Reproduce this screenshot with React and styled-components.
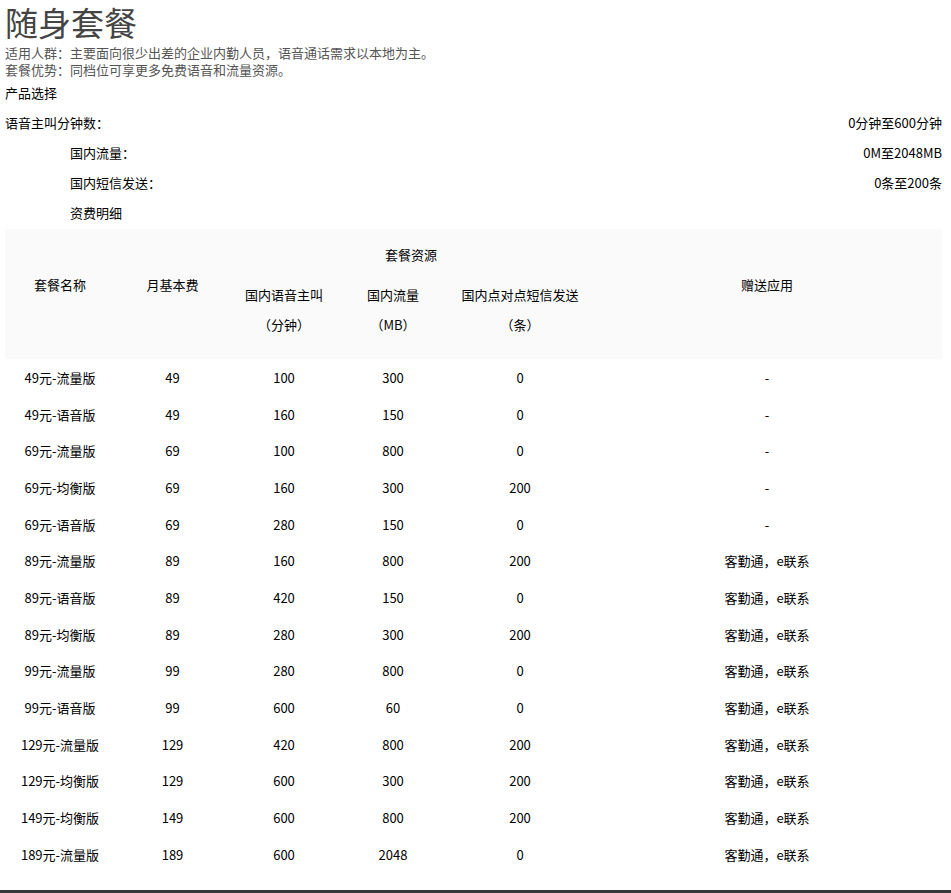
import React from "react";
import styled, { createGlobalStyle } from "styled-components";

const Global = createGlobalStyle`
  body { margin: 0; background: #fff; font-family: "Noto Sans CJK SC", "Noto Sans", sans-serif; color: #000; }
`;

const Page = styled.div`
  width: 951px; height: 893px; box-sizing: border-box; padding: 0 9px 0 5px;
  border-bottom: 3px solid #3a3a3a; position: relative;
`;
const Title = styled.h1`
  margin: 0; font-weight: 400; font-size: 33px; line-height: 44px; color: #444;
`;
const Desc = styled.p`
  margin: 0; font-size: 13px; line-height: 17px; color: #555;
`;
const Section = styled.div`
  font-size: 13px; line-height: 17px; margin-top: 6px; margin-bottom: 7px;
`;
const Opt = styled.div`
  display: flex; justify-content: space-between; font-size: 13px; line-height: 30px;
  padding-left: ${p => p.$indent ? 65 : 0}px;
`;
const cols = "110px 115px 108px 110px 144px 1fr";
const Head = styled.div`
  margin-top: 1px; background: #fafafa; display: grid; grid-template-columns: ${cols};
  grid-template-rows: 50px 30px 30px 20px; font-size: 13px;
`;
const HCell = styled.div`
  display: flex; align-items: center; justify-content: center;
  grid-column: ${p => p.$c}; grid-row: ${p => p.$r};
`;
const Row = styled.div`
  display: grid; grid-template-columns: ${cols}; height: 36.7px; align-items: center;
  font-size: 13px; text-align: center;
`;

const data = [
  ["49元-流量版",49,100,300,0,"-"],["49元-语音版",49,160,150,0,"-"],["69元-流量版",69,100,800,0,"-"],
  ["69元-均衡版",69,160,300,200,"-"],["69元-语音版",69,280,150,0,"-"],["89元-流量版",89,160,800,200,"客勤通，e联系"],
  ["89元-语音版",89,420,150,0,"客勤通，e联系"],["89元-均衡版",89,280,300,200,"客勤通，e联系"],["99元-流量版",99,280,800,0,"客勤通，e联系"],
  ["99元-语音版",99,600,60,0,"客勤通，e联系"],["129元-流量版",129,420,800,200,"客勤通，e联系"],["129元-均衡版",129,600,300,200,"客勤通，e联系"],
  ["149元-均衡版",149,600,800,200,"客勤通，e联系"],["189元-流量版",189,600,2048,0,"客勤通，e联系"],
];

export default function App() {
  return (
    <Page>
      <Global />
      <Title>随身套餐</Title>
      <Desc>适用人群：主要面向很少出差的企业内勤人员，语音通话需求以本地为主。</Desc>
      <Desc>套餐优势：同档位可享更多免费语音和流量资源。</Desc>
      <Section>产品选择</Section>
      <Opt><span>语音主叫分钟数：</span><span>0分钟至600分钟</span></Opt>
      <Opt $indent><span>国内流量：</span><span>0M至2048MB</span></Opt>
      <Opt $indent><span>国内短信发送：</span><span>0条至200条</span></Opt>
      <Opt $indent><span>资费明细</span></Opt>
      <Head>
        <HCell $c="3 / 6" $r="1">套餐资源</HCell>
        <HCell $c="1" $r="1 / 4">套餐名称</HCell>
        <HCell $c="2" $r="1 / 4">月基本费</HCell>
        <HCell $c="6" $r="1 / 4">赠送应用</HCell>
        <HCell $c="3" $r="2">国内语音主叫</HCell>
        <HCell $c="4" $r="2">国内流量</HCell>
        <HCell $c="5" $r="2">国内点对点短信发送</HCell>
        <HCell $c="3" $r="3">（分钟）</HCell>
        <HCell $c="4" $r="3">（MB）</HCell>
        <HCell $c="5" $r="3">（条）</HCell>
      </Head>
      {data.map((r, i) => (
        <Row key={i}>{r.map((v, j) => <span key={j}>{v}</span>)}</Row>
      ))}
    </Page>
  );
}
